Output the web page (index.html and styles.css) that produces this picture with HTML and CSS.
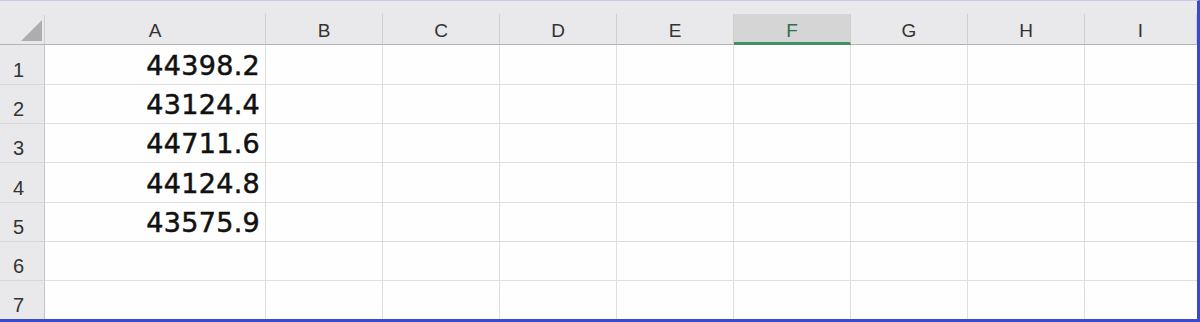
FILE: index.html
```html
<!DOCTYPE html>
<html lang="en">
<head>
    <meta charset="UTF-8">
    <meta name="viewport" content="width=device-width, initial-scale=1.0">
    <title>Sheet1</title>
    <link rel="stylesheet" href="styles.css">
</head>
<body>

<div class="window">
    <div class="sheet">
        <!-- column headers -->
        <div class="corner">
            <svg width="21" height="21" viewBox="0 0 21 21"><polygon points="0,21 21,21 21,0" fill="#adadad"/></svg>
        </div>
        <div class="col-head">A</div>
        <div class="col-head">B</div>
        <div class="col-head">C</div>
        <div class="col-head">D</div>
        <div class="col-head">E</div>
        <div class="col-head selected">F</div>
        <div class="col-head">G</div>
        <div class="col-head">H</div>
        <div class="col-head">I</div>

        <!-- rows -->
        <div class="row-head">1</div>
        <div class="cell num">44398.2</div>
        <div class="cell"></div><div class="cell"></div><div class="cell"></div><div class="cell"></div>
        <div class="cell"></div><div class="cell"></div><div class="cell"></div><div class="cell"></div>

        <div class="row-head">2</div>
        <div class="cell num">43124.4</div>
        <div class="cell"></div><div class="cell"></div><div class="cell"></div><div class="cell"></div>
        <div class="cell"></div><div class="cell"></div><div class="cell"></div><div class="cell"></div>

        <div class="row-head">3</div>
        <div class="cell num">44711.6</div>
        <div class="cell"></div><div class="cell"></div><div class="cell"></div><div class="cell"></div>
        <div class="cell"></div><div class="cell"></div><div class="cell"></div><div class="cell"></div>

        <div class="row-head">4</div>
        <div class="cell num">44124.8</div>
        <div class="cell"></div><div class="cell"></div><div class="cell"></div><div class="cell"></div>
        <div class="cell"></div><div class="cell"></div><div class="cell"></div><div class="cell"></div>

        <div class="row-head">5</div>
        <div class="cell num">43575.9</div>
        <div class="cell"></div><div class="cell"></div><div class="cell"></div><div class="cell"></div>
        <div class="cell"></div><div class="cell"></div><div class="cell"></div><div class="cell"></div>

        <div class="row-head">6</div>
        <div class="cell num"></div>
        <div class="cell"></div><div class="cell"></div><div class="cell"></div><div class="cell"></div>
        <div class="cell"></div><div class="cell"></div><div class="cell"></div><div class="cell"></div>

        <div class="row-head last">7</div>
        <div class="cell last num"></div>
        <div class="cell last"></div><div class="cell last"></div><div class="cell last"></div><div class="cell last"></div>
        <div class="cell last"></div><div class="cell last"></div><div class="cell last"></div><div class="cell last"></div>
    </div>
</div>

</body>
</html>
```

FILE: styles.css
```css
body {
    margin: 0;
    padding: 0;
    background-color: #fff;
    font-family: 'Liberation Sans', Arial, sans-serif;
}
.window {
    width: 1200px;
    height: 322px;
    box-sizing: border-box;
    border-top: 1px solid #c9c8e6;
    border-right: 3px solid #3b49cf;
    border-bottom: 3px solid #3b49cf;
    overflow: hidden;
}
.sheet {
    display: grid;
    grid-template-columns: 45px 221px repeat(7, 117px) 1fr;
    grid-template-rows: 44px 40px 39px 39px 40px 39px 39px 38px;
    background-color: #e9e8ea;
    height: 100%;
}
.corner, .col-head {
    box-sizing: border-box;
    margin-top: 13px;
    border-right: 1px solid #cfcfcf;
    border-bottom: 1px solid #b4b4b4;
}
.corner {
    display: flex;
    justify-content: flex-end;
    align-items: flex-end;
    padding: 0 3px 3px 0;
    margin-top: 0;
    border-right: none;
    position: relative;
}
/* short divider beside the corner triangle */
.corner::after {
    content: '';
    position: absolute;
    right: 0;
    top: 14px;
    bottom: 0;
    border-right: 1px solid #cfcfcf;
}
.col-head {
    display: flex;
    justify-content: center;
    align-items: flex-end;
    padding-bottom: 4px;
    font-size: 19px;
    line-height: 19px;
    color: #333;
}
.col-head:last-child {
    border-right: none;
}
.col-head.selected {
    background-color: #d5d5d5;
    border-bottom: 3px solid #3f9163;
    padding-bottom: 2px;
    color: #2f6f4b;
}
.row-head {
    box-sizing: border-box;
    display: flex;
    align-items: flex-end;
    padding: 0 0 4px 13px;
    font-size: 20px;
    line-height: 20px;
    color: #333;
    border-right: 1px solid #c4c4c4;
    border-bottom: 1px solid #d6d6d6;
}
.cell {
    box-sizing: border-box;
    background-color: #fefefe;
    border-right: 1px solid #dedede;
    border-bottom: 1px solid #dedede;
}
.cell:nth-child(10n) {
    border-right: none;
}
.cell.num {
    display: flex;
    justify-content: flex-end;
    align-items: flex-end;
    padding: 0 5px 5px 0;
    font-family: 'DejaVu Sans', sans-serif;
    font-size: 27px;
    line-height: 27px;
    letter-spacing: 0.3px;
    color: #111;
    -webkit-text-stroke: 0.5px #111;
}
.last {
    border-bottom: none;
}
```
